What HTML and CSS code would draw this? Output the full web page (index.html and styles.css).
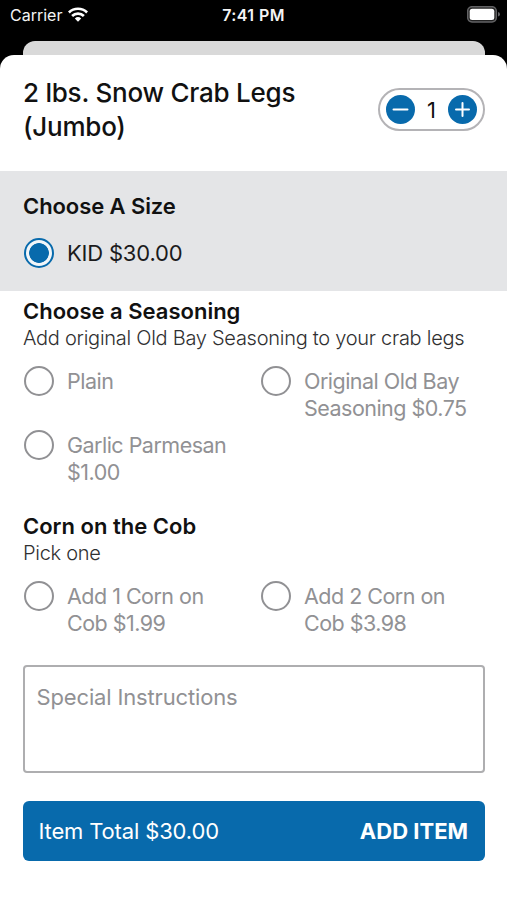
FILE: index.html
```html
<!DOCTYPE html>
<html lang="en">
<head>
<meta charset="utf-8">
<title>2 lbs. Snow Crab Legs</title>
<link rel="stylesheet" href="styles.css">
</head>
<body>
<div class="status">
  <div class="carrier"><span>Carrier</span>
    <svg width="20" height="15" viewBox="0 0 20 15" fill="none" stroke="#fff" stroke-width="2.7"><path d="M.9 5.4a13.2 13.2 0 0 1 18.2 0"/><path d="M4.1 9a8.4 8.4 0 0 1 11.8 0"/><path d="M10 14.8 6.8 11.5a4.7 4.7 0 0 1 6.4 0Z" fill="#fff" stroke="none"/></svg>
  </div>
  <div class="time">7:41 PM</div>
  <div class="battery"><svg width="33" height="17" viewBox="0 0 33 17"><rect x=".7" y=".7" width="28.6" height="15.2" rx="4.3" fill="#222" stroke="#626264" stroke-width="1.5"/><rect x="2.7" y="2.7" width="24.6" height="11.2" rx="2.5" fill="#fff"/><path d="M31 6q2 .5 2 2.3t-2 2.3Z" fill="#626264"/></svg></div>
</div>
<div class="backsheet"></div>
<main class="sheet">
  <header class="head">
    <h1>2 lbs. Snow Crab Legs<br>(Jumbo)</h1>
    <div class="stepper">
      <button class="step" aria-label="Decrease"><svg width="29" height="29" viewBox="0 0 29 29"><path d="M7.5 14.5h14"/></svg></button>
      <span class="qty">1</span>
      <button class="step" aria-label="Increase"><svg width="29" height="29" viewBox="0 0 29 29"><path d="M8 14.5h13M14.5 8v13"/></svg></button>
    </div>
  </header>
  <section class="size">
    <h2 class="t-size">Choose A Size</h2>
    <div class="option selected"><i class="radio"></i><span>KID $30.00</span></div>
  </section>
  <section class="group">
    <h2>Choose a Seasoning</h2>
    <p>Add original Old Bay Seasoning to your crab legs</p>
    <div class="options">
      <div class="option"><i class="radio"></i><span>Plain</span></div>
      <div class="option"><i class="radio"></i><span>Original Old Bay<br>Seasoning $0.75</span></div>
      <div class="option"><i class="radio"></i><span>Garlic Parmesan<br>$1.00</span></div>
    </div>
  </section>
  <section class="group corn">
    <h2>Corn on the Cob</h2>
    <p>Pick one</p>
    <div class="options">
      <div class="option"><i class="radio"></i><span>Add 1 Corn on<br>Cob $1.99</span></div>
      <div class="option"><i class="radio"></i><span>Add 2 Corn on<br>Cob $3.98</span></div>
    </div>
  </section>
  <div class="notes"><span>Special Instructions</span></div>
  <button class="submit"><span class="total">Item Total $30.00</span><span class="add">ADD ITEM</span></button>
</main>
</body>
</html>
```
FILE: styles.css
```css
* { box-sizing: border-box; }
body { margin: 0; height: 900px; overflow: hidden; background: #000; font-family: Inter, sans-serif; color: #111; display: flex; flex-direction: column; }
h1, h2, p { margin: 0; }
button { font: inherit; border: 0; padding: 0; }
.status { height: 41px; padding: 0 7px 12px 10px; display: grid; grid-template-columns: 1fr auto 1fr; align-items: center; color: #f4f4f4; font-size: 16px; }
.carrier { display: flex; align-items: center; gap: 6px; }
.time { font-weight: 600; letter-spacing: .4px; margin-right: 3px; }
.battery { display: flex; justify-content: flex-end; }
.backsheet { height: 14px; flex: none; margin: 0 22px 0 23px; background: #d9d9d9; border-radius: 12px 12px 0 0; }
.sheet { flex: 1; background: #fff; border-radius: 14px 14px 0 0; }
.head { height: 116px; display: flex; justify-content: space-between; padding: 21px 22px 0 23px; }
h1 { font-size: 26px; font-weight: 540; line-height: 34px; letter-spacing: -.24px; }
.stepper { width: 107px; height: 43px; margin-top: 12px; border: 2px solid #b4b3b6; border-radius: 22px; display: flex; align-items: center; justify-content: space-between; padding: 0 5.5px; }
.step { width: 29px; height: 29px; border-radius: 50%; background: #086aac; }
.step svg { display: block; stroke: #fff; stroke-width: 2; stroke-linecap: round; }
.qty { font-size: 22px; }
.size { height: 120px; background: #e4e5e7; padding: 22px 23px 0; }
h2 { font-size: 22px; font-weight: 600; line-height: 27px; }
.t-size { letter-spacing: -.08px; }
.group { padding: 7px 23px 0; }
.group p { font-size: 20px; line-height: 26px; color: #303031; font-weight: 350; letter-spacing: -.27px; white-space: nowrap; }
.options { display: grid; grid-template-columns: 237px 1fr; row-gap: 11px; margin-top: 17px; }
.option { display: flex; font-size: 21.5px; line-height: 26.5px; letter-spacing: -.52px; color: #919194; white-space: nowrap; }
.radio { flex: none; width: 30px; height: 30px; margin: -2px 13px 0 1px; border: 2px solid #919194; border-radius: 50%; }
.selected { color: #1b1b1c; margin-top: 20px; font-size: 22px; letter-spacing: -.2px; }
.selected .radio { border-color: #086aac; background: radial-gradient(circle, #086aac 9.5px, #f2f6f9 10.2px); }
.corn { padding-top: 28px; }
.notes { margin: 29px 22px 0 22.5px; height: 108px; border: 2px solid #aeaeb0; border-radius: 4px; padding: 17px 12px; font-size: 22px; line-height: 27px; letter-spacing: -.15px; color: #919194; }
.submit { margin: 28px 22px 0 22.5px; width: 462.5px; height: 60px; border-radius: 6px; background: #086aac; color: #fff; display: flex; align-items: center; justify-content: space-between; padding: 0 17px 0 16px; font-size: 22px; }
.total { letter-spacing: -.15px; }
.add { font-weight: 700; }
```
